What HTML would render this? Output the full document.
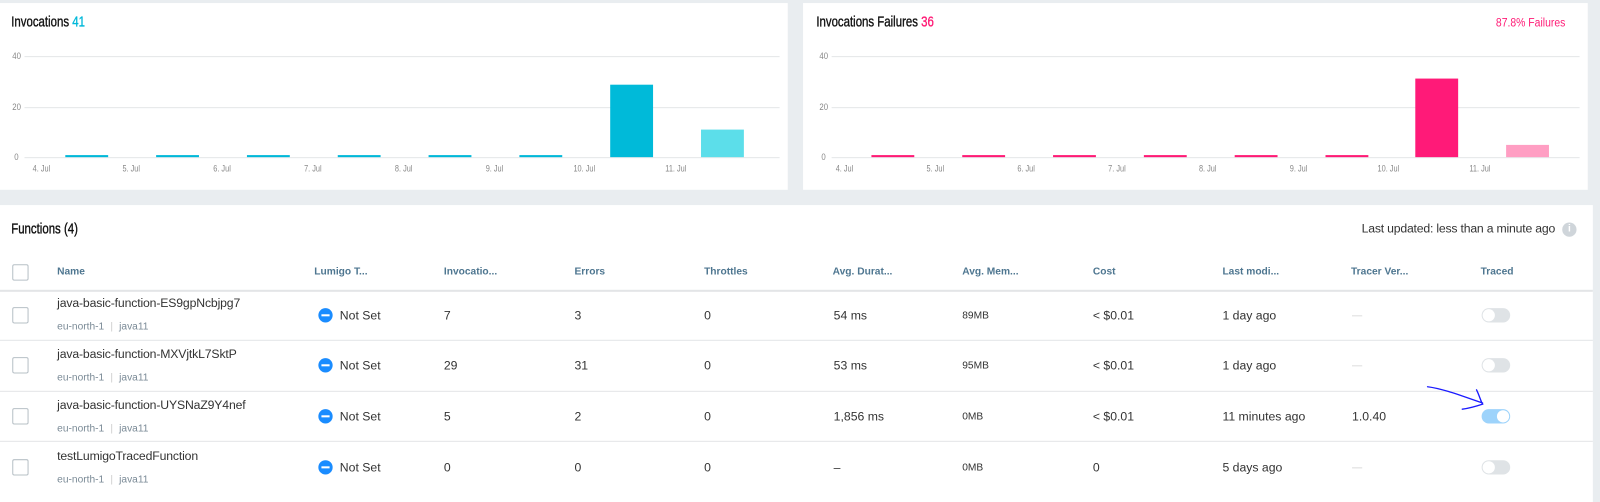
<!DOCTYPE html>
<html><head><meta charset="utf-8"><style>
*{margin:0;padding:0;box-sizing:border-box}
body{width:1600px;height:492px;background:#e9edf0;font-family:"Liberation Sans",sans-serif;position:relative;overflow:hidden;color:#333}
#w{position:absolute;left:0;top:0;width:1568px;height:482px;transform:scale(1.0204);transform-origin:0 0}
.card{position:absolute;background:#fff}
.a{position:absolute;white-space:nowrap}
.t{font-size:14px;transform:scaleX(.8);transform-origin:left;-webkit-text-stroke:.35px #111;color:#111}
.g{position:absolute;height:1px;background:#e4e6e8}
.yl{position:absolute;font-size:9px;color:#888;transform:scaleX(.85);transform-origin:left}
.xl{position:absolute;font-size:9px;color:#888;top:160px;transform:scaleX(.8);transform-origin:left}
.b{position:absolute}
.h{position:absolute;top:261px;font-size:10px;font-weight:bold;color:#4e7690}
.rl{position:absolute;left:0;width:1561px;height:1px;background:#e3e5e7}
.cb{position:absolute;left:12px;width:16px;height:16px;border:1.5px solid #b7c0c6;border-radius:2px;background:#fff}
.nm{position:absolute;left:56px;font-size:12px;color:#333;letter-spacing:-.15px}
.sub{position:absolute;left:56px;font-size:10px;color:#7a8a96}
.sub i{font-style:normal;color:#ccc;margin:0 6px}
.v{position:absolute;font-size:12px;color:#333}
.sm{position:absolute;font-size:10px;color:#333}
.ns{position:absolute;left:312px;font-size:12px}
.ns b{display:inline-block;width:14px;height:14px;border-radius:50%;background:#1a8cff;vertical-align:-3px;margin-right:7px;position:relative}
.ns b:after{content:"";position:absolute;left:3px;top:6px;width:8px;height:2px;background:#fff}
.tg{position:absolute;left:1452px;width:28px;height:14px;border-radius:7px;background:#dfe3e6}
.tg:after{content:"";position:absolute;left:1px;top:1px;width:12px;height:12px;border-radius:50%;background:#fff}
.tg.on{background:#9dd3fb}
.tg.on:after{left:15px}
.dash{position:absolute;left:1325px;width:10px;height:1px;background:#ddd}
</style></head><body><div id="w">

<div class="card" style="left:0;top:3px;width:772px;height:183px"></div>
<div class="card" style="left:787px;top:3px;width:769px;height:183px"></div>
<div class="card" style="left:0;top:201px;width:1561px;height:291px"></div>

<div class="a t" style="left:11px;top:13px">Invocations <span style="color:#00b8d9;-webkit-text-stroke:.35px #00b8d9">41</span></div>
<div class="yl" style="left:12px;top:50px">40</div>
<div class="yl" style="left:12px;top:100px">20</div>
<div class="yl" style="left:14px;top:149px">0</div>
<div class="g" style="left:24px;top:55px;width:740px"></div>
<div class="g" style="left:24px;top:105px;width:740px"></div>
<div class="g" style="left:24px;top:154px;width:740px"></div>
<div class="b" style="left:64px;top:152px;width:42px;height:2px;background:#00b8d9"></div>
<div class="b" style="left:153px;top:152px;width:42px;height:2px;background:#00b8d9"></div>
<div class="b" style="left:242px;top:152px;width:42px;height:2px;background:#00b8d9"></div>
<div class="b" style="left:331px;top:152px;width:42px;height:2px;background:#00b8d9"></div>
<div class="b" style="left:420px;top:152px;width:42px;height:2px;background:#00b8d9"></div>
<div class="b" style="left:509px;top:152px;width:42px;height:2px;background:#00b8d9"></div>
<div class="b" style="left:598px;top:83px;width:42px;height:71px;background:#00bad9"></div>
<div class="b" style="left:687px;top:127px;width:42px;height:27px;background:#5cdeea"></div>
<div class="xl" style="left:32px">4. Jul</div><div class="xl" style="left:120px">5. Jul</div><div class="xl" style="left:209px">6. Jul</div><div class="xl" style="left:298px">7. Jul</div><div class="xl" style="left:387px">8. Jul</div><div class="xl" style="left:476px">9. Jul</div><div class="xl" style="left:562px">10. Jul</div><div class="xl" style="left:652px">11. Jul</div>

<div class="a t" style="left:800px;top:13px">Invocations Failures <span style="color:#ff1a75;-webkit-text-stroke:.35px #ff1a75">36</span></div>
<div class="a" style="left:1466px;top:15px;font-size:12px;color:#ff1a75;transform:scaleX(.85);transform-origin:left">87.8% Failures</div>
<div class="yl" style="left:803px;top:50px">40</div>
<div class="yl" style="left:803px;top:100px">20</div>
<div class="yl" style="left:805px;top:149px">0</div>
<div class="g" style="left:815px;top:55px;width:733px"></div>
<div class="g" style="left:815px;top:105px;width:733px"></div>
<div class="g" style="left:815px;top:154px;width:733px"></div>
<div class="b" style="left:854px;top:152px;width:42px;height:2px;background:#ff1a75"></div>
<div class="b" style="left:943px;top:152px;width:42px;height:2px;background:#ff1a75"></div>
<div class="b" style="left:1032px;top:152px;width:42px;height:2px;background:#ff1a75"></div>
<div class="b" style="left:1121px;top:152px;width:42px;height:2px;background:#ff1a75"></div>
<div class="b" style="left:1210px;top:152px;width:42px;height:2px;background:#ff1a75"></div>
<div class="b" style="left:1299px;top:152px;width:42px;height:2px;background:#ff1a75"></div>
<div class="b" style="left:1387px;top:77px;width:42px;height:77px;background:#ff1a78"></div>
<div class="b" style="left:1476px;top:142px;width:42px;height:12px;background:#ff9ec3"></div>
<div class="xl" style="left:819px">4. Jul</div><div class="xl" style="left:908px">5. Jul</div><div class="xl" style="left:997px">6. Jul</div><div class="xl" style="left:1086px">7. Jul</div><div class="xl" style="left:1175px">8. Jul</div><div class="xl" style="left:1264px">9. Jul</div><div class="xl" style="left:1350px">10. Jul</div><div class="xl" style="left:1440px">11. Jul</div>

<div class="a t" style="left:11px;top:216px">Functions (4)</div>
<div class="a" style="right:44px;top:217px;font-size:12px;color:#333;letter-spacing:-.2px">Last updated: less than a minute ago</div>
<div class="a" style="left:1531px;top:218px;width:14px;height:14px;border-radius:50%;background:#cfd5da;color:#fff;font-size:10px;font-weight:bold;text-align:center;line-height:14px">i</div>

<div class="cb" style="top:259px"></div>
<div class="h" style="left:56px">Name</div>
<div class="h" style="left:308px">Lumigo T...</div>
<div class="h" style="left:435px">Invocatio...</div>
<div class="h" style="left:563px">Errors</div>
<div class="h" style="left:690px">Throttles</div>
<div class="h" style="left:816px">Avg. Durat...</div>
<div class="h" style="left:943px">Avg. Mem...</div>
<div class="h" style="left:1071px">Cost</div>
<div class="h" style="left:1198px">Last modi...</div>
<div class="h" style="left:1324px">Tracer Ver...</div>
<div class="h" style="left:1451px">Traced</div>
<div class="rl" style="top:284px;height:2px"></div>
<div class="rl" style="top:333px"></div>
<div class="rl" style="top:383px"></div>
<div class="rl" style="top:432px"></div>

<div class="cb" style="top:301px"></div>
<div class="nm" style="top:290px">java-basic-function-ES9gpNcbjpg7</div>
<div class="sub" style="top:315px">eu-north-1<i>|</i>java11</div>
<div class="ns" style="top:302px"><b></b>Not Set</div>
<div class="v" style="left:435px;top:302px">7</div>
<div class="v" style="left:563px;top:302px">3</div>
<div class="v" style="left:690px;top:302px">0</div>
<div class="v" style="left:817px;top:302px">54 ms</div>
<div class="sm" style="left:943px;top:304px">89MB</div>
<div class="v" style="left:1071px;top:302px">&lt; $0.01</div>
<div class="v" style="left:1198px;top:302px">1 day ago</div>
<div class="dash" style="top:309px"></div>
<div class="tg" style="top:302px"></div>

<div class="cb" style="top:350px"></div>
<div class="nm" style="top:340px">java-basic-function-MXVjtkL7SktP</div>
<div class="sub" style="top:365px">eu-north-1<i>|</i>java11</div>
<div class="ns" style="top:351px"><b></b>Not Set</div>
<div class="v" style="left:435px;top:351px">29</div>
<div class="v" style="left:563px;top:351px">31</div>
<div class="v" style="left:690px;top:351px">0</div>
<div class="v" style="left:817px;top:351px">53 ms</div>
<div class="sm" style="left:943px;top:353px">95MB</div>
<div class="v" style="left:1071px;top:351px">&lt; $0.01</div>
<div class="v" style="left:1198px;top:351px">1 day ago</div>
<div class="dash" style="top:358px"></div>
<div class="tg" style="top:351px"></div>

<div class="cb" style="top:400px"></div>
<div class="nm" style="top:390px">java-basic-function-UYSNaZ9Y4nef</div>
<div class="sub" style="top:415px">eu-north-1<i>|</i>java11</div>
<div class="ns" style="top:401px"><b></b>Not Set</div>
<div class="v" style="left:435px;top:401px">5</div>
<div class="v" style="left:563px;top:401px">2</div>
<div class="v" style="left:690px;top:401px">0</div>
<div class="v" style="left:817px;top:401px">1,856 ms</div>
<div class="sm" style="left:943px;top:403px">0MB</div>
<div class="v" style="left:1071px;top:401px">&lt; $0.01</div>
<div class="v" style="left:1198px;top:401px">11 minutes ago</div>
<div class="v" style="left:1325px;top:401px">1.0.40</div>
<div class="tg on" style="top:401px"></div>
<svg class="a" style="left:1395px;top:375px" width="60" height="35" viewBox="0 0 60 35"><path d="M4 4 C 20 6, 40 14, 58 20 M52 7 C 55 13, 56 18, 58 21 C 52 23, 45 25, 38 26" fill="none" stroke="#1a1aff" stroke-width="1.3" stroke-linecap="round"/></svg>

<div class="cb" style="top:450px"></div>
<div class="nm" style="top:440px">testLumigoTracedFunction</div>
<div class="sub" style="top:465px">eu-north-1<i>|</i>java11</div>
<div class="ns" style="top:451px"><b></b>Not Set</div>
<div class="v" style="left:435px;top:451px">0</div>
<div class="v" style="left:563px;top:451px">0</div>
<div class="v" style="left:690px;top:451px">0</div>
<div class="v" style="left:817px;top:451px">–</div>
<div class="sm" style="left:943px;top:453px">0MB</div>
<div class="v" style="left:1071px;top:451px">0</div>
<div class="v" style="left:1198px;top:451px">5 days ago</div>
<div class="dash" style="top:458px"></div>
<div class="tg" style="top:451px"></div>
</div></body></html>
